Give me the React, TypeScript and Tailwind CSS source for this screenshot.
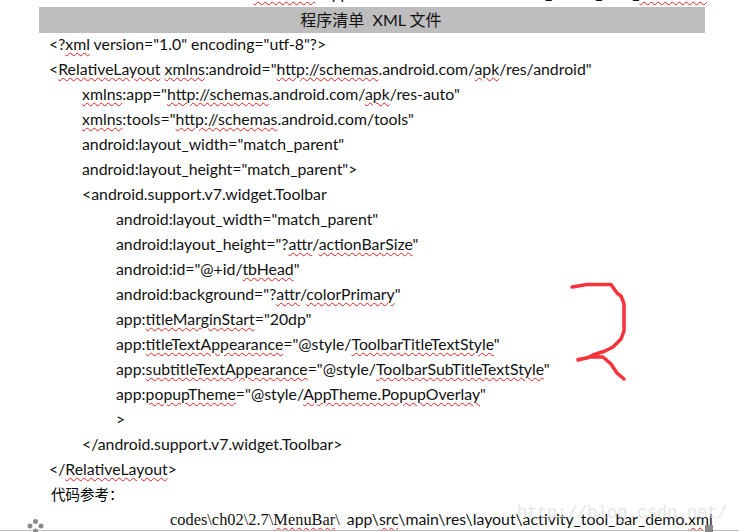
import React from 'react';

// lines of the xml listing: [indent level, text]. a part in {} gets the spell check squiggle
const lines: [number, string][] = [
  [0, '<?{xml} version="1.0" encoding="utf-8"?>'],
  [0, '<{RelativeLayout} {xmlns}:android="{http://schemas}.android.com/{apk}/res/android"'],
  [1, '{xmlns}:app="{http://schemas}.android.com/{apk}/res-auto"'],
  [1, '{xmlns}:tools="{http://schemas}.android.com/tools"'],
  [1, 'android:layout_width="match_parent"'],
  [1, 'android:layout_height="match_parent">'],
  [1, '<android.support.v7.widget.Toolbar'],
  [2, 'android:layout_width="match_parent"'],
  [2, 'android:layout_height="?{attr}/{actionBarSize}"'],
  [2, 'android:id="@+id/{tbHead}"'],
  [2, 'android:background="?{attr}/{colorPrimary}"'],
  [2, 'app:{titleMarginStart}="20dp"'],
  [2, 'app:{titleTextAppearance}="@style/{ToolbarTitleTextStyle}"'],
  [2, 'app:{subtitleTextAppearance}="@style/{ToolbarSubTitleTextStyle}"'],
  [2, 'app:{popupTheme}="@style/{AppTheme.PopupOverlay}"'],
  [2, '>'],
  [1, '</android.support.v7.widget.Toolbar>'],
  [0, '</{RelativeLayout}>'],
];

const squiggle = 'underline decoration-wavy decoration-[#e02020] decoration-1 underline-offset-2';
const serif = "font-['Liberation_Serif',serif] text-[16.4px]";

function Marked({ text }: { text: string }) {
  const parts = text.split(/(\{[^}]*\})/).filter(Boolean);
  return (
    <>
      {parts.map((p, i) =>
        p.startsWith('{') ? (
          <span key={i} className={squiggle}>{p.slice(1, -1)}</span>
        ) : (
          <span key={i}>{p}</span>
        ),
      )}
    </>
  );
}

export default function App() {
  return (
    <div className="relative h-[532px] w-[739px] overflow-hidden bg-white font-['Lato','Liberation_Sans',sans-serif] text-[15.83px] text-[#111]">
      {/* cut off line of the page above */}
      <div className="mt-[-17px] h-[24px] pl-[150px] leading-[19px] whitespace-nowrap">
        <span className={serif}>codes\ch02\2.7\<span className={squiggle}>MenuBar</span>\</span> app\src\main\res\menu\toolbar_action_new_<span className={squiggle}>menu.xml</span>
      </div>

      <div className="ml-[39px] mr-[34px] flex h-[26px] items-center justify-center bg-[#bdbdbd] pr-[2px] font-['Lato','Noto_Sans_CJK_SC',sans-serif] text-[16px]">
        程序清单&nbsp;&nbsp;XML 文件
      </div>

      <div className="mt-[-2px] pl-[49px]">
        {lines.map(([level, text], i) => (
          <div
            key={i}
            className={`h-[25px] whitespace-nowrap leading-[25px] ${level === 1 ? 'pl-[33px]' : level === 2 ? 'pl-[67px]' : ''}`}
          >
            <Marked text={text} />
          </div>
        ))}
        <div className="h-[25px] pl-[2px] font-['Noto_Sans_CJK_SC',sans-serif] text-[14.5px] leading-[25px] text-black">
          代码参考：
        </div>
      </div>

      <div className="pl-[170px] leading-[25px] whitespace-nowrap">
        <span className={serif}>codes\ch02\2.7\<span className={squiggle}>MenuBar</span>\</span>
        <span className="ml-[7px]">app\<span className={squiggle}>src</span>\main\res\layout\activity_tool_bar_demo.<span className={squiggle}>xml</span></span>
      </div>

      {/* page edge at the bottom */}
      <div className="absolute bottom-[1px] left-0 right-0 h-px bg-[#bbb]" />
      <div className="absolute bottom-0 left-[705px] h-[7px] w-[8px] bg-[#888]" />

      {/* table move handle */}
      <svg className="absolute left-[27px] top-[519px]" width="17" height="13" viewBox="0 0 17 13">
        <g fill="#8a8a8a">
          <circle cx="8.5" cy="2.5" r="2.5" />
          <circle cx="3" cy="7" r="2.5" />
          <circle cx="14" cy="7" r="2.5" />
          <circle cx="8.5" cy="12" r="2.5" />
        </g>
      </svg>

      {/* hand drawn red mark */}
      <svg className="absolute left-[540px] top-[270px]" width="110" height="120" viewBox="0 0 110 120" fill="none">
        <path
          d="M32 17 L47 14.5 L71 14.5 L77 23 L81 26 L83 31 L84 34 L84 61 L81 69 L73 77 L65 81 L53 85 L47 88 L38 89.5 M38 90 L50 87 L63 87 L71 94 L77 103 L84 109"
          stroke="#f8333c"
          strokeWidth="3.5"
          strokeLinecap="round"
          strokeLinejoin="round"
        />
      </svg>

      {/* watermark */}
      <div className="absolute left-[517px] top-[500px] font-['Liberation_Mono',monospace] text-[17.5px] tracking-[-0.5px] whitespace-nowrap text-[#d4d4d4]/60">
        http://blog.csdn.net/
      </div>
    </div>
  );
}
